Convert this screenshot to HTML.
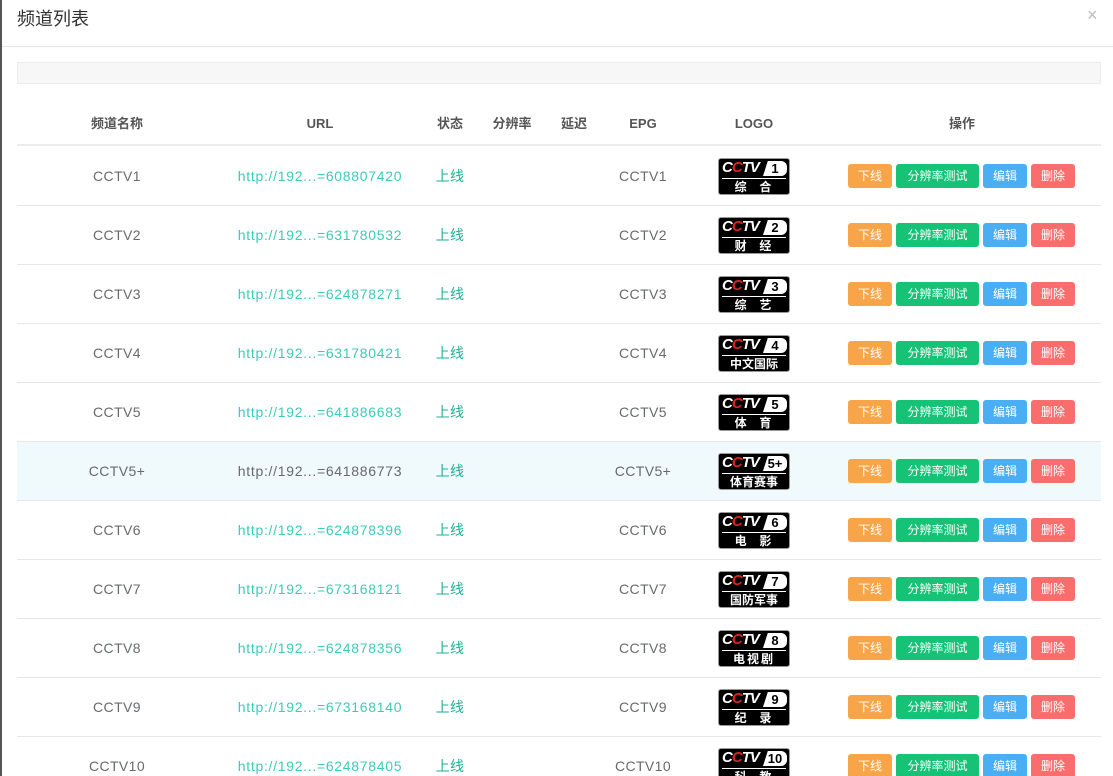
<!DOCTYPE html>
<html><head><meta charset="utf-8"><style>
*{margin:0;padding:0;box-sizing:border-box}
html,body{width:1113px;height:776px;overflow:hidden}
body{background:#fff;font-family:"Liberation Sans","Noto Sans CJK SC",sans-serif;position:relative;color:#676a6c}
.lstrip{position:absolute;left:0;top:0;width:2px;height:776px;background:#555}
.title{position:absolute;left:17px;top:7px;font-size:18px;color:#333;line-height:24px}
.close{position:absolute;left:1087px;top:5px;font-size:18px;color:#bbb}
.hr{position:absolute;left:2px;right:0;top:46px;height:1px;background:#e5e5e5}
.bar{position:absolute;left:17px;top:62px;width:1084px;height:22px;background:#f7f7f7;border:1px solid #ececec}
.hd{position:absolute;top:100px;left:17px;width:1084px;height:46px;border-bottom:2px solid #ececec}
.c{position:absolute;text-align:center;white-space:nowrap;line-height:20px;height:20px}
.hd .c{top:14px;font-size:13px;font-weight:bold;color:#555}
.row{position:absolute;left:17px;width:1084px;height:59px;border-bottom:1px solid #e7e7e7;font-size:14px;letter-spacing:0.4px}
.row .c{top:19px}
.hl{background:#f0f9fb}
.u{color:#3ccbb8;letter-spacing:0.7px}.s{color:#1fae96}
.logo{position:absolute;left:701px;top:11px;width:72px;height:37px;background:#000;border-radius:3px;border:1px solid #999;overflow:hidden;letter-spacing:0}
.logo .t{position:absolute;left:3px;top:0;font:italic bold 15px "Liberation Sans",sans-serif;color:#fff;letter-spacing:-1px}
.logo .t b{color:#d22}
.logo .n{position:absolute;right:2px;top:2px;width:24px;height:15px;background:#fff;border-radius:0 6px 6px 0;color:#000;font:bold 13px "Liberation Sans",sans-serif;text-align:center;line-height:15px;clip-path:polygon(20% 0,100% 0,100% 100%,0 100%)}
.logo .l{position:absolute;left:3px;right:3px;top:19px;height:1px;background:#fff}
.logo .b{position:absolute;left:0;right:0;top:20px;text-align:center;color:#fff;font-size:12px;line-height:16px;font-weight:bold;letter-spacing:2px}
.btn{position:absolute;top:17px;height:24px;line-height:24px;border-radius:3px;color:#fff;font-size:12px;text-align:center;letter-spacing:0}
.b1{left:831px;width:44px;background:#f8a54a}
.b2{left:879px;width:83px;background:#16c276}
.b3{left:966px;width:44px;background:#4aaef5}
.b4{left:1014px;width:44px;background:#f96d6d}
</style></head><body>
<div class="lstrip"></div>
<div class="title">频道列表</div>
<div class="close">×</div>
<div class="hr"></div>
<div class="bar"></div>
<div class="hd">
<div class="c" style="left:40px;width:120px">频道名称</div>
<div class="c" style="left:243px;width:120px">URL</div>
<div class="c" style="left:403px;width:60px">状态</div>
<div class="c" style="left:465px;width:60px">分辨率</div>
<div class="c" style="left:527px;width:60px">延迟</div>
<div class="c" style="left:596px;width:60px">EPG</div>
<div class="c" style="left:697px;width:80px">LOGO</div>
<div class="c" style="left:905px;width:80px">操作</div>
</div>

<div class="row" style="top:147px"><div class="c" style="left:40px;width:120px">CCTV1</div><div class="c u" style="left:203px;width:200px">http://192...=608807420</div><div class="c s" style="left:403px;width:60px">上线</div><div class="c" style="left:576px;width:100px">CCTV1</div><div class="logo"><div class="t">C<b>C</b>TV</div><div class="n">1</div><div class="l"></div><div class="b">综&nbsp;&nbsp;合</div></div><div class="btn b1">下线</div><div class="btn b2">分辨率测试</div><div class="btn b3">编辑</div><div class="btn b4">删除</div></div>
<div class="row" style="top:206px"><div class="c" style="left:40px;width:120px">CCTV2</div><div class="c u" style="left:203px;width:200px">http://192...=631780532</div><div class="c s" style="left:403px;width:60px">上线</div><div class="c" style="left:576px;width:100px">CCTV2</div><div class="logo"><div class="t">C<b>C</b>TV</div><div class="n">2</div><div class="l"></div><div class="b">财&nbsp;&nbsp;经</div></div><div class="btn b1">下线</div><div class="btn b2">分辨率测试</div><div class="btn b3">编辑</div><div class="btn b4">删除</div></div>
<div class="row" style="top:265px"><div class="c" style="left:40px;width:120px">CCTV3</div><div class="c u" style="left:203px;width:200px">http://192...=624878271</div><div class="c s" style="left:403px;width:60px">上线</div><div class="c" style="left:576px;width:100px">CCTV3</div><div class="logo"><div class="t">C<b>C</b>TV</div><div class="n">3</div><div class="l"></div><div class="b">综&nbsp;&nbsp;艺</div></div><div class="btn b1">下线</div><div class="btn b2">分辨率测试</div><div class="btn b3">编辑</div><div class="btn b4">删除</div></div>
<div class="row" style="top:324px"><div class="c" style="left:40px;width:120px">CCTV4</div><div class="c u" style="left:203px;width:200px">http://192...=631780421</div><div class="c s" style="left:403px;width:60px">上线</div><div class="c" style="left:576px;width:100px">CCTV4</div><div class="logo"><div class="t">C<b>C</b>TV</div><div class="n">4</div><div class="l"></div><div class="b" style="letter-spacing:0">中文国际</div></div><div class="btn b1">下线</div><div class="btn b2">分辨率测试</div><div class="btn b3">编辑</div><div class="btn b4">删除</div></div>
<div class="row" style="top:383px"><div class="c" style="left:40px;width:120px">CCTV5</div><div class="c u" style="left:203px;width:200px">http://192...=641886683</div><div class="c s" style="left:403px;width:60px">上线</div><div class="c" style="left:576px;width:100px">CCTV5</div><div class="logo"><div class="t">C<b>C</b>TV</div><div class="n">5</div><div class="l"></div><div class="b">体&nbsp;&nbsp;育</div></div><div class="btn b1">下线</div><div class="btn b2">分辨率测试</div><div class="btn b3">编辑</div><div class="btn b4">删除</div></div>
<div class="row hl" style="top:442px"><div class="c" style="left:40px;width:120px">CCTV5+</div><div class="c" style="left:203px;width:200px;letter-spacing:0.7px">http://192...=641886773</div><div class="c s" style="left:403px;width:60px">上线</div><div class="c" style="left:576px;width:100px">CCTV5+</div><div class="logo"><div class="t">C<b>C</b>TV</div><div class="n">5+</div><div class="l"></div><div class="b" style="letter-spacing:0">体育赛事</div></div><div class="btn b1">下线</div><div class="btn b2">分辨率测试</div><div class="btn b3">编辑</div><div class="btn b4">删除</div></div>
<div class="row" style="top:501px"><div class="c" style="left:40px;width:120px">CCTV6</div><div class="c u" style="left:203px;width:200px">http://192...=624878396</div><div class="c s" style="left:403px;width:60px">上线</div><div class="c" style="left:576px;width:100px">CCTV6</div><div class="logo"><div class="t">C<b>C</b>TV</div><div class="n">6</div><div class="l"></div><div class="b">电&nbsp;&nbsp;影</div></div><div class="btn b1">下线</div><div class="btn b2">分辨率测试</div><div class="btn b3">编辑</div><div class="btn b4">删除</div></div>
<div class="row" style="top:560px"><div class="c" style="left:40px;width:120px">CCTV7</div><div class="c u" style="left:203px;width:200px">http://192...=673168121</div><div class="c s" style="left:403px;width:60px">上线</div><div class="c" style="left:576px;width:100px">CCTV7</div><div class="logo"><div class="t">C<b>C</b>TV</div><div class="n">7</div><div class="l"></div><div class="b" style="letter-spacing:0">国防军事</div></div><div class="btn b1">下线</div><div class="btn b2">分辨率测试</div><div class="btn b3">编辑</div><div class="btn b4">删除</div></div>
<div class="row" style="top:619px"><div class="c" style="left:40px;width:120px">CCTV8</div><div class="c u" style="left:203px;width:200px">http://192...=624878356</div><div class="c s" style="left:403px;width:60px">上线</div><div class="c" style="left:576px;width:100px">CCTV8</div><div class="logo"><div class="t">C<b>C</b>TV</div><div class="n">8</div><div class="l"></div><div class="b">电视剧</div></div><div class="btn b1">下线</div><div class="btn b2">分辨率测试</div><div class="btn b3">编辑</div><div class="btn b4">删除</div></div>
<div class="row" style="top:678px"><div class="c" style="left:40px;width:120px">CCTV9</div><div class="c u" style="left:203px;width:200px">http://192...=673168140</div><div class="c s" style="left:403px;width:60px">上线</div><div class="c" style="left:576px;width:100px">CCTV9</div><div class="logo"><div class="t">C<b>C</b>TV</div><div class="n">9</div><div class="l"></div><div class="b">纪&nbsp;&nbsp;录</div></div><div class="btn b1">下线</div><div class="btn b2">分辨率测试</div><div class="btn b3">编辑</div><div class="btn b4">删除</div></div>
<div class="row" style="top:737px"><div class="c" style="left:40px;width:120px">CCTV10</div><div class="c u" style="left:203px;width:200px">http://192...=624878405</div><div class="c s" style="left:403px;width:60px">上线</div><div class="c" style="left:576px;width:100px">CCTV10</div><div class="logo"><div class="t">C<b>C</b>TV</div><div class="n">10</div><div class="l"></div><div class="b">科&nbsp;&nbsp;教</div></div><div class="btn b1">下线</div><div class="btn b2">分辨率测试</div><div class="btn b3">编辑</div><div class="btn b4">删除</div></div>
</body></html>
